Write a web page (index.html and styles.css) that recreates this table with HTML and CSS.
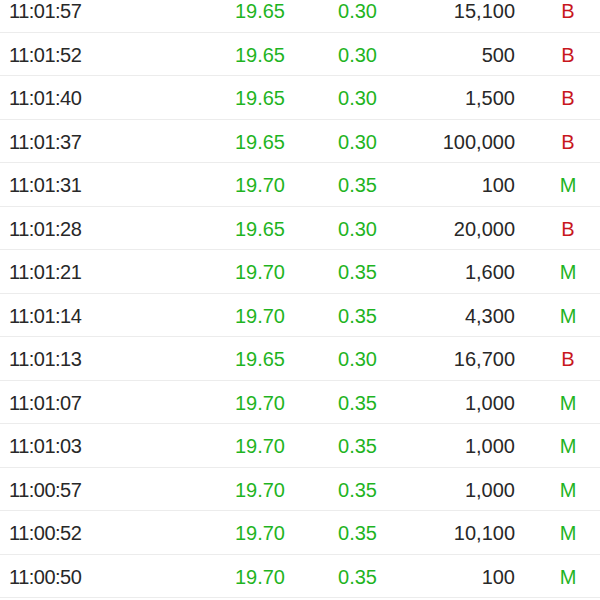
FILE: index.html
```html
<!DOCTYPE html>
<html>
<head>
<meta charset="utf-8">
<link rel="stylesheet" href="styles.css">
</head>
<body>
<div class="list">
  <div class="row"><span class="time">11:01:57</span><span class="price up">19.65</span><span class="chg up">0.30</span><span class="vol">15,100</span><span class="side buy">B</span></div>
  <div class="row"><span class="time">11:01:52</span><span class="price up">19.65</span><span class="chg up">0.30</span><span class="vol">500</span><span class="side buy">B</span></div>
  <div class="row"><span class="time">11:01:40</span><span class="price up">19.65</span><span class="chg up">0.30</span><span class="vol">1,500</span><span class="side buy">B</span></div>
  <div class="row"><span class="time">11:01:37</span><span class="price up">19.65</span><span class="chg up">0.30</span><span class="vol">100,000</span><span class="side buy">B</span></div>
  <div class="row"><span class="time">11:01:31</span><span class="price up">19.70</span><span class="chg up">0.35</span><span class="vol">100</span><span class="side sell">M</span></div>
  <div class="row"><span class="time">11:01:28</span><span class="price up">19.65</span><span class="chg up">0.30</span><span class="vol">20,000</span><span class="side buy">B</span></div>
  <div class="row"><span class="time">11:01:21</span><span class="price up">19.70</span><span class="chg up">0.35</span><span class="vol">1,600</span><span class="side sell">M</span></div>
  <div class="row"><span class="time">11:01:14</span><span class="price up">19.70</span><span class="chg up">0.35</span><span class="vol">4,300</span><span class="side sell">M</span></div>
  <div class="row"><span class="time">11:01:13</span><span class="price up">19.65</span><span class="chg up">0.30</span><span class="vol">16,700</span><span class="side buy">B</span></div>
  <div class="row"><span class="time">11:01:07</span><span class="price up">19.70</span><span class="chg up">0.35</span><span class="vol">1,000</span><span class="side sell">M</span></div>
  <div class="row"><span class="time">11:01:03</span><span class="price up">19.70</span><span class="chg up">0.35</span><span class="vol">1,000</span><span class="side sell">M</span></div>
  <div class="row"><span class="time">11:00:57</span><span class="price up">19.70</span><span class="chg up">0.35</span><span class="vol">1,000</span><span class="side sell">M</span></div>
  <div class="row"><span class="time">11:00:52</span><span class="price up">19.70</span><span class="chg up">0.35</span><span class="vol">10,100</span><span class="side sell">M</span></div>
  <div class="row"><span class="time">11:00:50</span><span class="price up">19.70</span><span class="chg up">0.35</span><span class="vol">100</span><span class="side sell">M</span></div>
</div>
</body>
</html>
```
FILE: styles.css
```css
html, body {
  margin: 0;
  padding: 0;
  background: #ffffff;
  overflow: hidden;
}
.list {
  margin-top: -11px;
  font-family: "Liberation Sans", Arial, sans-serif;
  font-size: 20px;
  color: #282828;
}
.row {
  box-sizing: border-box;
  height: 43.5px;
  border-bottom: 1px solid #ececec;
  display: grid;
  grid-template-columns: 171px 105px 92px 138px 1fr;
  align-items: center;
  padding-left: 9px;
  padding-top: 3px;
}
.time {
  letter-spacing: -0.5px;
}
.price, .chg, .vol {
  text-align: right;
}
.side {
  text-align: center;
  padding-left: 21px;
}
.up { color: #1fb41f; }
.buy { color: #c8161d; }
.sell { color: #1fb41f; }
```
